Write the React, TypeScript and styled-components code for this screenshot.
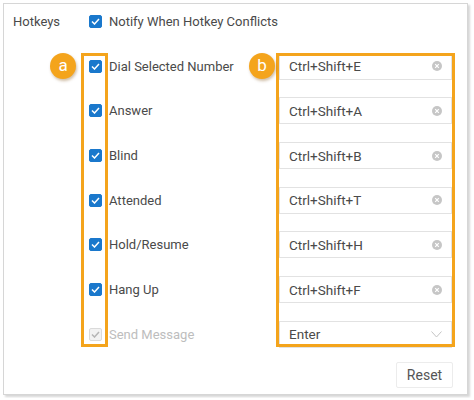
import React from 'react'
import styled, { createGlobalStyle } from 'styled-components'

const GlobalStyle = createGlobalStyle`
	body {
		margin: 0;
		background: #fff;
		font-family: Roboto, "Liberation Sans", Arial, sans-serif;
	}
`

const ORANGE = '#f4a41c'
const ROW_H = 44.67

const Page = styled.div`
	padding: 3px;
`

const Panel = styled.div`
	box-sizing: border-box;
	width: 465px;
	height: 392px;
	border: 1px solid #d6d6d6;
	box-shadow: 2px 2px 2px rgba(0, 0, 0, 0.16);
	background: #fff;
	color: #4a4a4a;
	font-size: 13px;
`

const Header = styled.div`
	display: flex;
	align-items: center;
	height: 34px;
	padding-left: 9px;
`

const SectionLabel = styled.span`
	width: 76px;
`

const CheckLabel = styled.span<{ $disabled?: boolean }>`
	margin-left: 7px;
	color: ${(p) => (p.$disabled ? '#bdbdbd' : '#4a4a4a')};
	white-space: nowrap;
`

const Box = styled.span<{ $disabled?: boolean }>`
	box-sizing: border-box;
	display: inline-flex;
	align-items: center;
	justify-content: center;
	width: 13px;
	height: 13px;
	border-radius: 2px;
	background: ${(p) => (p.$disabled ? '#f2f2f2' : '#1a78cc')};
	border: 1px solid ${(p) => (p.$disabled ? '#dadada' : '#1a78cc')};
	flex: none;
`

const List = styled.div`
	position: relative;
	margin-top: 6px;
`

const Row = styled.div`
	display: grid;
	grid-template-columns: 13px 177px 173px;
	align-items: center;
	height: ${ROW_H}px;
	padding-left: 85px;
`

const Field = styled.div`
	box-sizing: border-box;
	display: flex;
	align-items: center;
	justify-content: space-between;
	height: 27px;
	padding: 0 9px 0 9px;
	border: 1px solid #e2e2e2;
	background: #fff;
	color: #4a4a4a;
	font-size: 13.5px;
`

const Highlight = styled.div<{ $left: number; $width: number }>`
	position: absolute;
	box-sizing: border-box;
	top: 9px;
	left: ${(p) => p.$left}px;
	width: ${(p) => p.$width}px;
	height: 294px;
	border: 3px solid ${ORANGE};
	pointer-events: none;
`

const Badge = styled.div<{ $left: number }>`
	position: absolute;
	top: 9px;
	left: ${(p) => p.$left}px;
	width: 26px;
	height: 26px;
	border-radius: 50%;
	background: ${ORANGE};
	color: #fff;
	font-size: 17px;
	display: flex;
	align-items: center;
	justify-content: center;
	padding-bottom: 2px;
	box-sizing: border-box;
	box-shadow: 1px 2px 3px rgba(120, 70, 0, 0.35);
`

const Footer = styled.div`
	display: flex;
	justify-content: flex-end;
	padding: 5px 14px 0 0;
`

const ResetButton = styled.button`
	width: 57px;
	height: 26px;
	border: 1px solid #ececec;
	border-radius: 2px;
	background: #fff;
	color: #555;
	font-family: inherit;
	font-size: 14px;
	padding: 0;
`

const Checkbox: React.FC<{ disabled?: boolean }> = ({ disabled }) => (
	<Box $disabled={disabled}>
		<svg width="9" height="7" viewBox="0 0 9 7">
			<polyline
				points="1,3.5 3.5,6 8,1"
				fill="none"
				stroke={disabled ? '#b5b5b5' : '#fff'}
				strokeWidth="1.5"
			/>
		</svg>
	</Box>
)

const ClearIcon = () => (
	<svg width="10" height="10" viewBox="0 0 10 10">
		<circle cx="5" cy="5" r="5" fill="#c6c6c6" />
		<path d="M3.2 3.2 L6.8 6.8 M6.8 3.2 L3.2 6.8" stroke="#fff" strokeWidth="1.2" />
	</svg>
)

const Chevron = () => (
	<svg width="11" height="7" viewBox="0 0 11 7">
		<polyline points="0.5,0.5 5.5,6 10.5,0.5" fill="none" stroke="#c4c4c4" strokeWidth="1" />
	</svg>
)

const hotkeys = [
	{ label: 'Dial Selected Number', key: 'Ctrl+Shift+E' },
	{ label: 'Answer', key: 'Ctrl+Shift+A' },
	{ label: 'Blind', key: 'Ctrl+Shift+B' },
	{ label: 'Attended', key: 'Ctrl+Shift+T' },
	{ label: 'Hold/Resume', key: 'Ctrl+Shift+H' },
	{ label: 'Hang Up', key: 'Ctrl+Shift+F' },
]

const App: React.FC = () => {
	return (
		<Page>
			<GlobalStyle />
			<Panel>
				<Header>
					<SectionLabel>Hotkeys</SectionLabel>
					<Checkbox />
					<CheckLabel>Notify When Hotkey Conflicts</CheckLabel>
				</Header>
				<List>
					{hotkeys.map((h) => (
						<Row key={h.label}>
							<Checkbox />
							<CheckLabel>{h.label}</CheckLabel>
							<Field>
								<span>{h.key}</span>
								<ClearIcon />
							</Field>
						</Row>
					))}
					<Row>
						<Checkbox disabled />
						<CheckLabel $disabled>Send Message</CheckLabel>
						<Field>
							<span>Enter</span>
							<Chevron />
						</Field>
					</Row>
					<Highlight $left={77} $width={27} />
					<Highlight $left={272} $width={179} />
					<Badge $left={46}>a</Badge>
					<Badge $left={245}>b</Badge>
				</List>
				<Footer>
					<ResetButton>Reset</ResetButton>
				</Footer>
			</Panel>
		</Page>
	)
}

export default App
